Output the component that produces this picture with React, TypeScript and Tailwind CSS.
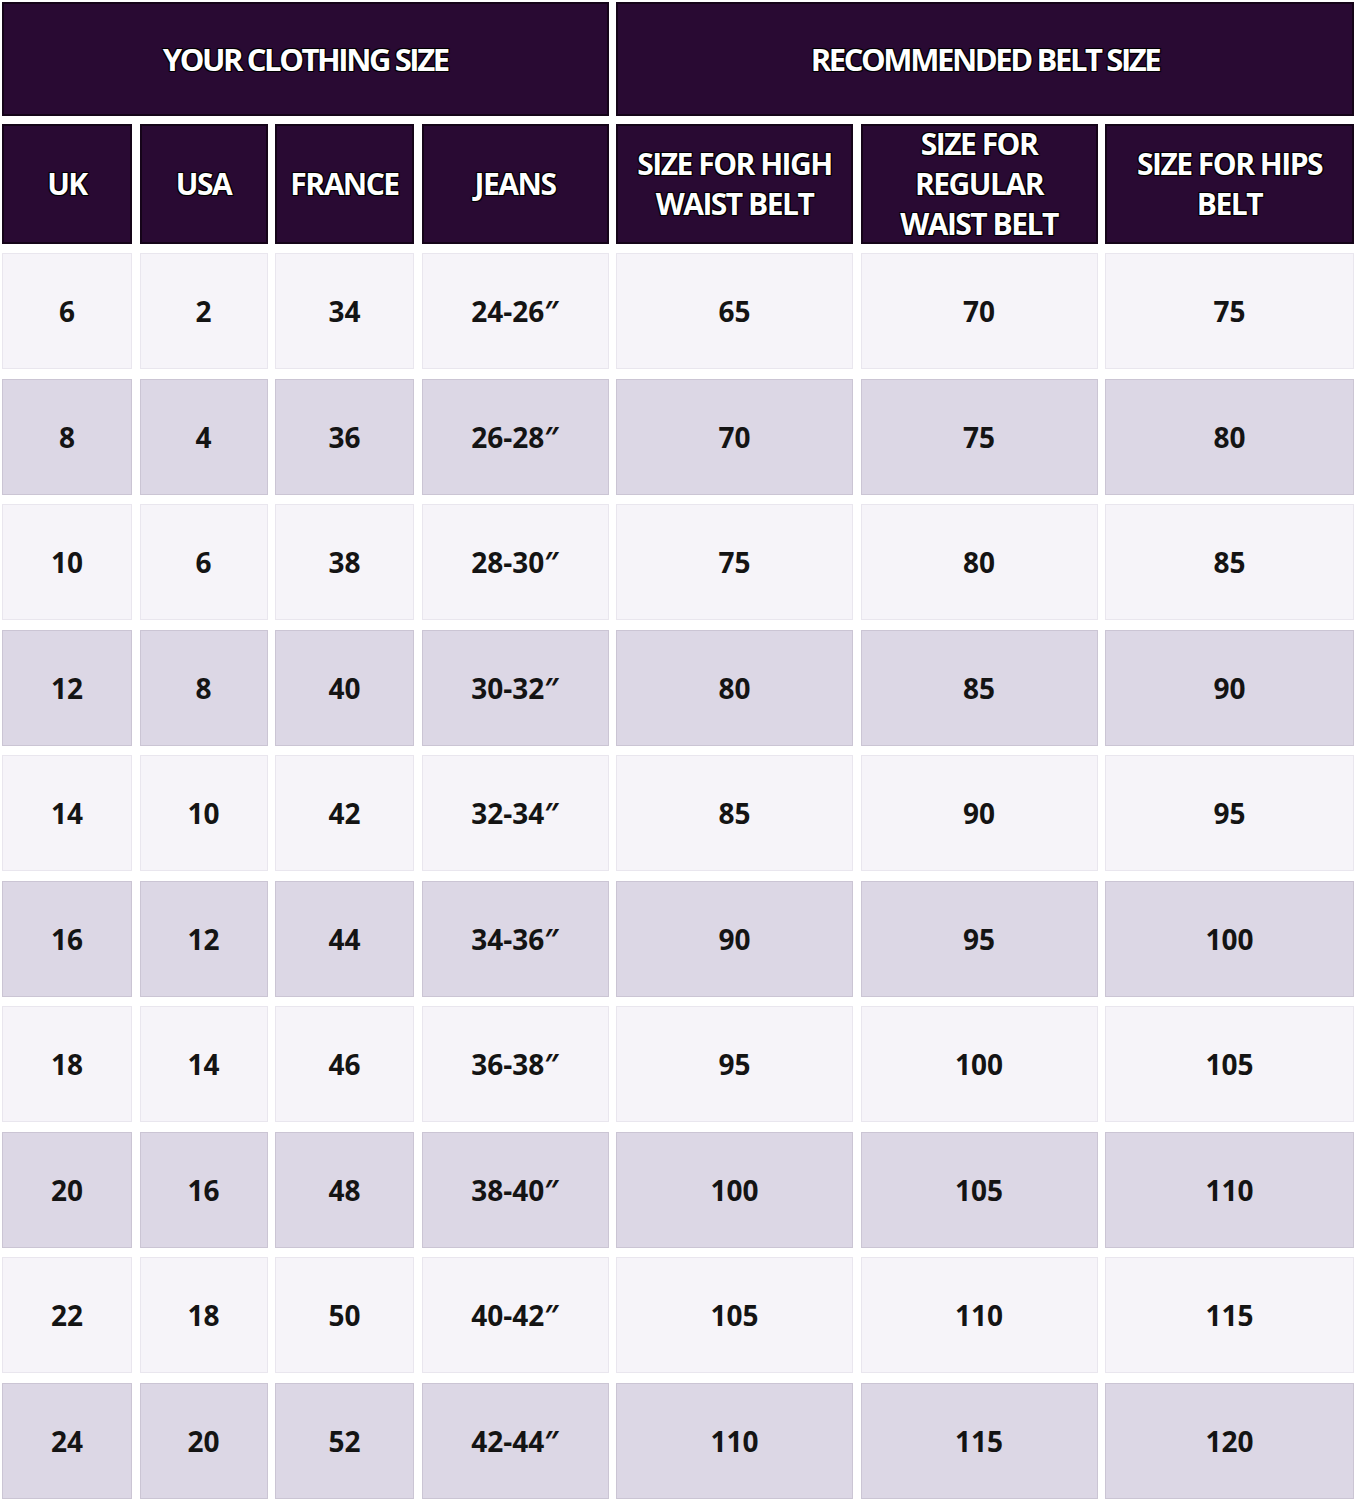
import React from "react";

const rows: string[][] = [
  ["6", "2", "34", "24-26\u2033", "65", "70", "75"],
  ["8", "4", "36", "26-28\u2033", "70", "75", "80"],
  ["10", "6", "38", "28-30\u2033", "75", "80", "85"],
  ["12", "8", "40", "30-32\u2033", "80", "85", "90"],
  ["14", "10", "42", "32-34\u2033", "85", "90", "95"],
  ["16", "12", "44", "34-36\u2033", "90", "95", "100"],
  ["18", "14", "46", "36-38\u2033", "95", "100", "105"],
  ["20", "16", "48", "38-40\u2033", "100", "105", "110"],
  ["22", "18", "50", "40-42\u2033", "105", "110", "115"],
  ["24", "20", "52", "42-44\u2033", "110", "115", "120"],
];

const subHeaders: string[][] = [
  ["UK"],
  ["USA"],
  ["FRANCE"],
  ["JEANS"],
  ["SIZE FOR HIGH", "WAIST BELT"],
  ["SIZE FOR", "REGULAR", "WAIST BELT"],
  ["SIZE FOR HIPS", "BELT"],
];

const headCls =
  "bg-[#290a33] border-2 border-[#150419] flex flex-col items-center justify-center text-white font-bold [text-shadow:0_0_2px_#000,1px_1px_0_#000,-1px_-1px_0_#000,1px_-1px_0_#000,-1px_1px_0_#000]";

export default function App() {
  return (
    <div
      className="w-[1358px] h-[1500px] bg-white pt-[2px] pl-[2px]"
      style={{ fontFamily: '"Open Sans", "Liberation Sans", sans-serif' }}
    >
      <div className="w-[1352px] grid grid-cols-[130px_128px_139px_187px_237px_237px_249px] gap-x-[7.5px]">
        <div className={`${headCls} col-span-4 h-[114px] text-[31px] tracking-[-2.4px]`}>
          YOUR CLOTHING SIZE
        </div>
        <div className={`${headCls} col-span-3 h-[114px] text-[31px] tracking-[-2.4px]`}>
          RECOMMENDED BELT SIZE
        </div>

        {subHeaders.map((lines, i) => (
          <div
            key={i}
            className={`${headCls} mt-[8px] h-[120px] text-[30px] leading-[40px] tracking-[-1.5px] text-center`}
          >
            {lines.map((l, j) => (
              <span key={j} className="block whitespace-nowrap">
                {l}
              </span>
            ))}
          </div>
        ))}
      </div>

      <div className="w-[1352px] mt-[9px] grid grid-cols-[130px_128px_139px_187px_237px_237px_249px] gap-x-[7.5px] gap-y-[9.5px]">
        {rows.map((r, ri) =>
          r.map((v, ci) => (
            <div
              key={`${ri}-${ci}`}
              className={`h-[116px] flex items-center justify-center text-[28px] font-bold text-[#141414] border ${
                ri % 2 === 0
                  ? "bg-[#f6f4f9] border-[#e9e6ee]"
                  : "bg-[#dcd7e5] border-[#cbc5d4]"
              }`}
            >
              {v}
            </div>
          ))
        )}
      </div>
    </div>
  );
}
